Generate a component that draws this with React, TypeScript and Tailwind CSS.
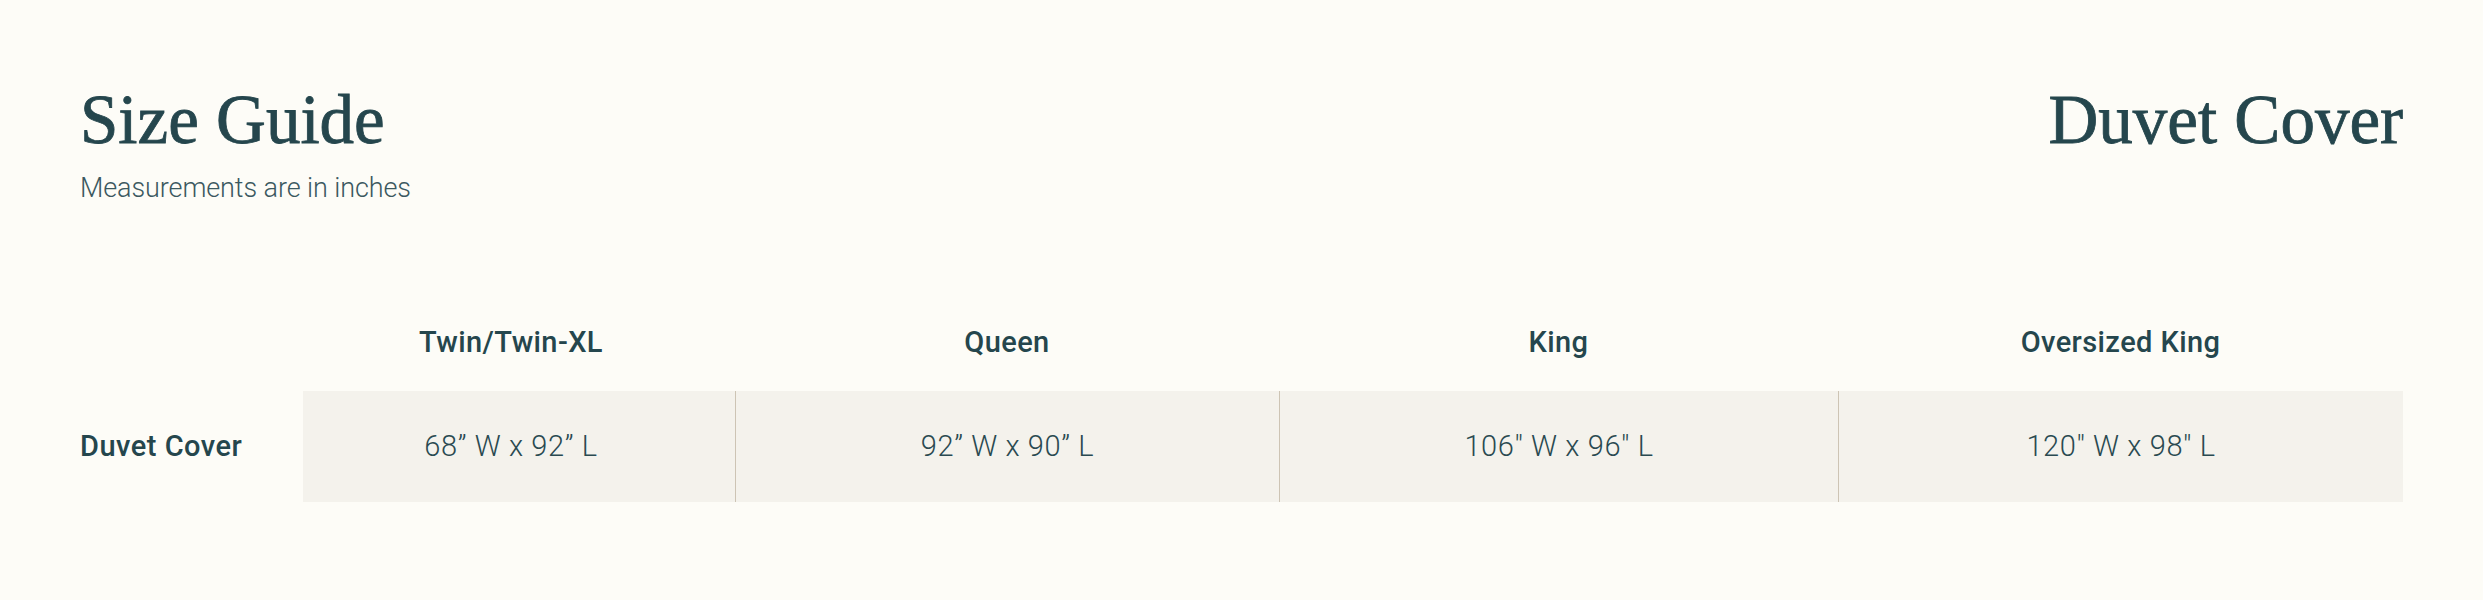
const sizes = [
  { name: "Twin/Twin-XL", value: "68” W x 92” L" },
  { name: "Queen", value: "92” W x 90” L" },
  { name: "King", value: '106" W x 96" L' },
  { name: "Oversized King", value: '120" W x 98" L' },
];

const serif = { fontFamily: '"Liberation Serif", "DejaVu Serif", serif' };

export default function App() {
  return (
    <div
      className="min-h-screen bg-[#fdfcf7] px-[80px] pt-[86px] text-[#25464d]"
      style={{ fontFamily: 'Roboto, "Noto Sans", sans-serif' }}
    >
      <div className="flex items-start justify-between">
        <div>
          <h1
            className="text-[69px] leading-none [-webkit-text-stroke:0.8px_#25464d]"
            style={serif}
          >
            Size Guide
          </h1>
          <p className="mt-[20px] text-[27px] font-light leading-none tracking-[-0.1px] text-[#3b5860]">
            Measurements are in inches
          </p>
        </div>
        <h2
          className="text-[69px] leading-none [-webkit-text-stroke:0.8px_#25464d]"
          style={serif}
        >
          Duvet Cover
        </h2>
      </div>

      <div className="mt-[126px] grid grid-cols-[223px_432px_544px_559px_565px]">
        <div />
        {sizes.map((s, i) => (
          <div
            key={s.name}
            className={`pb-[34px] text-center text-[29px] font-medium leading-none tracking-[0.4px] ${i === 0 ? "pr-4" : ""}`}
          >
            {s.name}
          </div>
        ))}

        <div className="flex h-[111px] items-center text-[29px] font-medium leading-none tracking-[0.5px]">
          Duvet Cover
        </div>
        {sizes.map((s, i) => (
          <div
            key={s.value}
            className={`flex h-[111px] items-center justify-center bg-[#f4f2ec] text-[29px] font-light leading-none tracking-[0.6px] text-[#2a4a51] ${
              i === 0 ? "pr-4" : "border-l border-[#cdc4b4]"
            }`}
          >
            {s.value}
          </div>
        ))}
      </div>
    </div>
  );
}
